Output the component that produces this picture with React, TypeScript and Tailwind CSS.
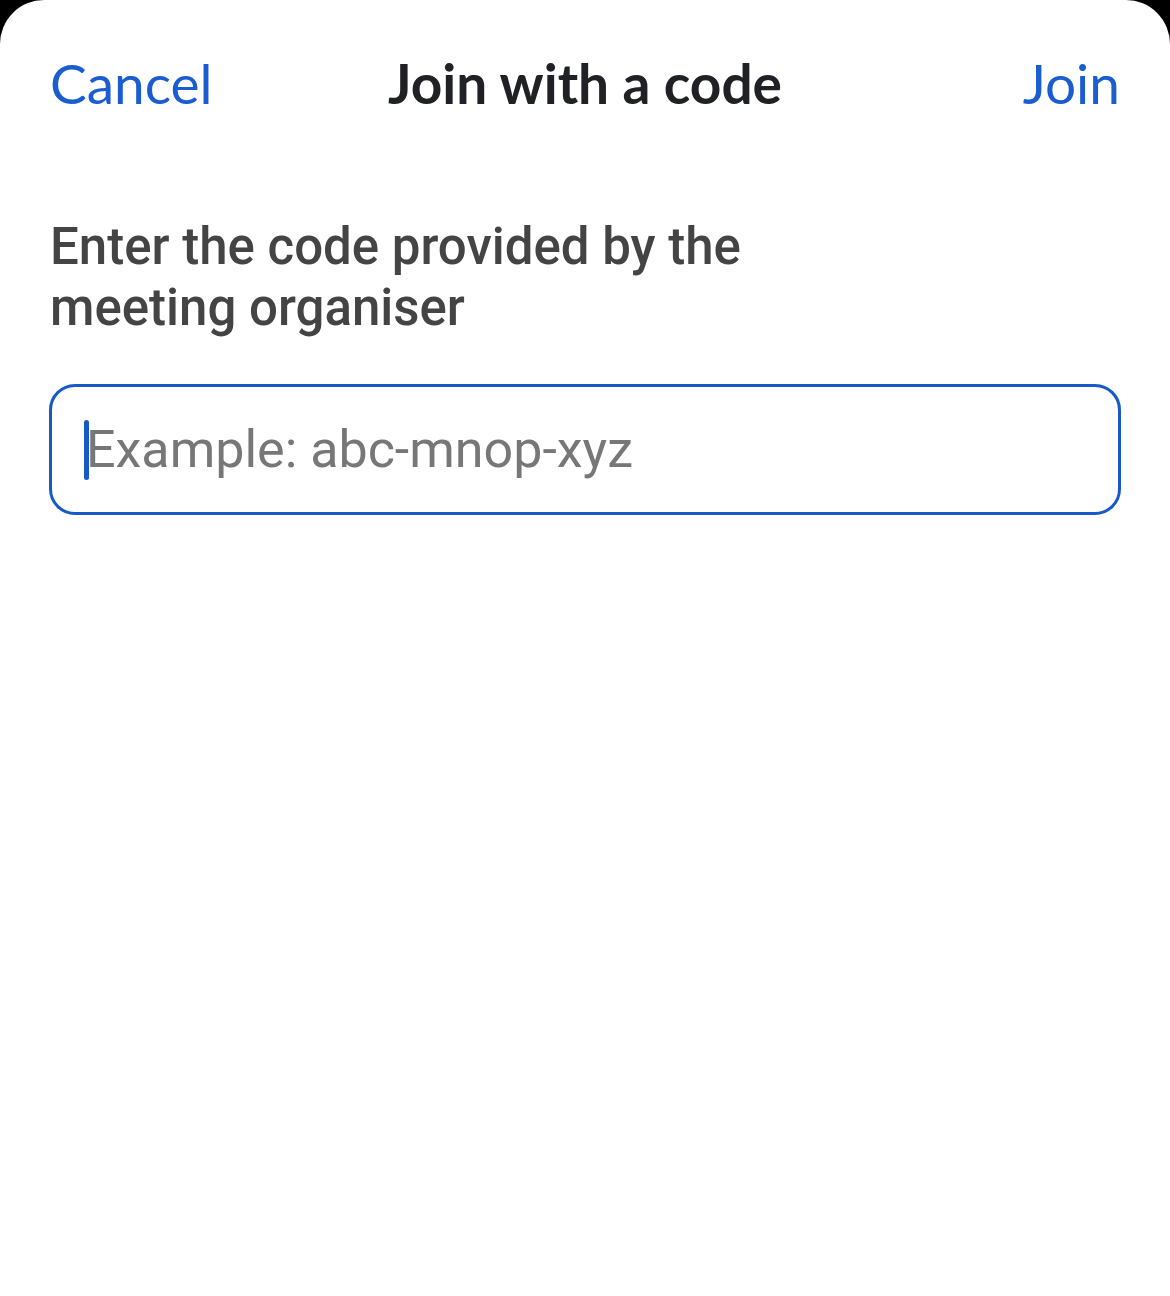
import React from "react";

export default function App() {
  const sans = { fontFamily: "Lato, 'Open Sans', sans-serif" };
  const rob = { fontFamily: "Roboto, sans-serif" };
  return (
    <div className="w-[1170px] h-[1296px] bg-black">
      <div className="w-full h-full bg-white rounded-t-[44px] flex flex-col">
        <div className="grid grid-cols-[1fr_auto_1fr] items-center px-[50px] pt-[54px] h-[112px]">
          <span className="justify-self-start text-[#1a5dd0] text-[55px] leading-none" style={sans}>Cancel</span>
          <span className="text-[#202124] text-[55px] font-bold leading-none" style={sans}>Join with a code</span>
          <span className="justify-self-end text-[#1a5dd0] text-[55px] leading-none" style={sans}>Join</span>
        </div>
        <div className="px-[50px] pt-[104px]">
          <p className="text-[#444444] text-[51px] font-medium leading-[61px] w-[760px]" style={rob}>
            Enter the code provided by the meeting organiser
          </p>
        </div>
        <div className="px-[49px] pt-[46px]">
          <div className="h-[131px] border-[3px] border-[#1759c9] rounded-[26px] flex items-center pl-[32px]">
            <div className="w-[5px] h-[60px] bg-[#1759c9] rounded-full relative z-10"></div>
            <span className="-ml-[3px] text-[#777777] text-[52px] leading-none" style={rob}>Example: abc-mnop-xyz</span>
          </div>
        </div>
      </div>
    </div>
  );
}
